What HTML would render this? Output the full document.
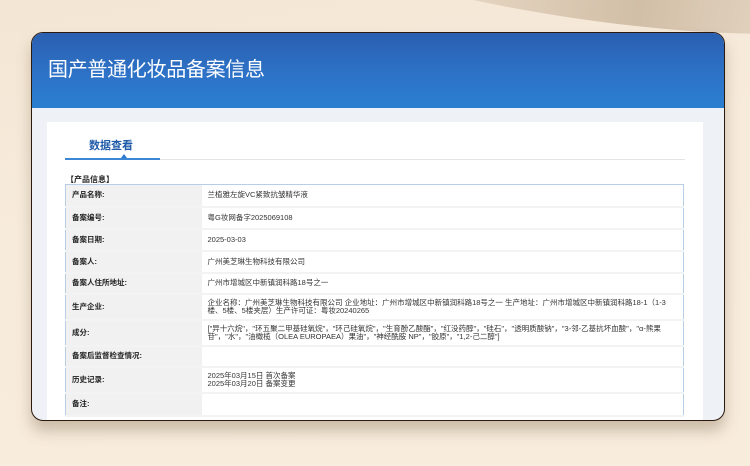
<!DOCTYPE html>
<html><head><meta charset="utf-8"><style>
*{margin:0;padding:0;box-sizing:border-box}
body{width:750px;height:466px;overflow:hidden;background:linear-gradient(170deg,#f4e6d4 0%,#f7ebdc 40%,#f8ecdd 100%);font-family:"Liberation Sans","Noto Sans CJK SC",sans-serif;position:relative}
.swoosh{position:absolute;left:330px;top:-60px;width:520px;height:80px;border-radius:50%;background:linear-gradient(90deg,rgba(200,180,150,0) 0%,#c9b49a 60%,#e8dccb 100%);transform:rotate(8deg);opacity:.8}
.card{position:absolute;left:31px;top:32px;width:694px;height:389px;border:1px solid #2a1a10;border-radius:12px;overflow:hidden;background:#eef2f7;box-shadow:0 10px 14px rgba(120,100,70,.35)}
.hd{height:75px;background:linear-gradient(180deg,#2a5fb0 0%,#2d74c9 60%,#2a7fd0 100%);color:#fff;font-size:20px;padding:20px 0 0 16px;letter-spacing:-0.3px}
.panel{position:absolute;left:15px;top:89px;width:656px;height:310px;background:#fff}
.tab{position:absolute;left:42px;top:15px;font-size:11px;color:#1e5aa8;font-weight:bold}
.line{position:absolute;left:18px;right:18px;top:37px;height:1px;background:#e2e4e8}
.line2{position:absolute;left:18px;width:95px;top:36px;height:2px;background:#3c86d6}
.tri{position:absolute;left:74px;top:32px;width:0;height:0;border-left:3px solid transparent;border-right:3px solid transparent;border-bottom:4px solid #2c7ad0}
.sec{position:absolute;left:19px;top:52px;font-size:8px;font-weight:bold;color:#222}
table{position:absolute;left:18px;top:62px;width:619px;border-collapse:collapse;border:1px solid #b8cde6;font-size:7.5px;color:#333}
td{border-bottom:2px solid #f2f3f5;padding:0 6px;vertical-align:middle;line-height:8px}
td.l{width:136px;background:#f1f1f1;font-weight:bold;color:#222}
</style></head><body>
<div class="swoosh"></div>
<div class="card">
<div class="hd">国产普通化妆品备案信息</div>
<div class="panel">
<div class="tab">数据查看</div>
<div class="line"></div><div class="line2"></div><div class="tri"></div>
<div class="sec">【产品信息】</div>
<table>
<tr style="height:22px"><td class="l">产品名称:</td><td>兰植雅左旋VC紧致抗皱精华液</td></tr>
<tr style="height:22px"><td class="l">备案编号:</td><td>粤G妆网备字2025069108</td></tr>
<tr style="height:22px"><td class="l">备案日期:</td><td>2025-03-03</td></tr>
<tr style="height:22px"><td class="l">备案人:</td><td>广州美芝琳生物科技有限公司</td></tr>
<tr style="height:21px"><td class="l">备案人住所地址:</td><td>广州市增城区中新镇润科路18号之一</td></tr>
<tr style="height:26px"><td class="l">生产企业:</td><td>企业名称：广州美芝琳生物科技有限公司 企业地址：广州市增城区中新镇润科路18号之一 生产地址：广州市增城区中新镇润科路18-1（1-3楼、5楼、5楼夹层）生产许可证：粤妆20240265</td></tr>
<tr style="height:26px"><td class="l">成分:</td><td>["异十六烷"，"环五聚二甲基硅氧烷"，"环己硅氧烷"，"生育酚乙酸酯"，"红没药醇"，"硅石"，"透明质酸钠"，"3-邻-乙基抗坏血酸"，"α-熊果苷"，"水"，"油橄榄（OLEA EUROPAEA）果油"，"神经酰胺 NP"，"胶原"，"1,2-己二醇"]</td></tr>
<tr style="height:21px"><td class="l">备案后监督检查情况:</td><td></td></tr>
<tr style="height:26px"><td class="l">历史记录:</td><td>2025年03月15日 首次备案<br>2025年03月20日 备案变更</td></tr>
<tr style="height:23px"><td class="l">备注:</td><td></td></tr>
</table>
</div>
</div>
</body></html>
